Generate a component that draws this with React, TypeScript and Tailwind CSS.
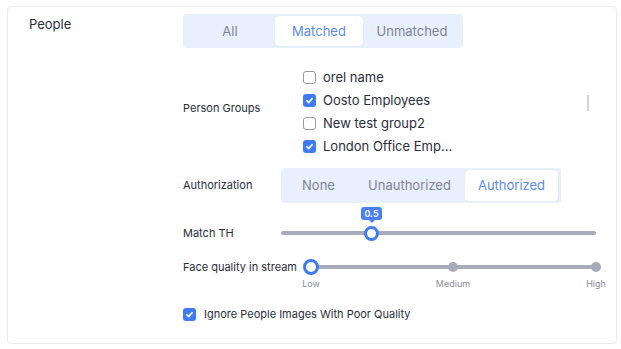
import React from "react";

const font = { fontFamily: "Inter, 'Noto Sans', sans-serif" };

function Check({ checked }: { checked: boolean }) {
  return checked ? (
    <div className="w-[13px] h-[13px] rounded-[3px] bg-[#3f7bf5] flex items-center justify-center shrink-0">
      <svg width="9" height="9" viewBox="0 0 10 10" fill="none">
        <path d="M2 5.2 L4.2 7.3 L8 2.8" stroke="white" strokeWidth="1.8" strokeLinecap="round" strokeLinejoin="round" />
      </svg>
    </div>
  ) : (
    <div className="w-[13px] h-[13px] rounded-[3px] border-[1.5px] border-[#9a9a9a] bg-white shrink-0" />
  );
}

function Tab({ label, active, w }: { label: string; active?: boolean; w: string }) {
  return (
    <div
      className={
        "flex items-center justify-center h-full text-[13px] " +
        w +
        (active ? " bg-white rounded-[4px] text-[#5b8bef] shadow-[0_0_1px_rgba(0,0,0,0.15)]" : " text-[#7f8393]")
      }
    >
      {label}
    </div>
  );
}

export default function App() {
  const groups = [
    { name: "orel name", checked: false },
    { name: "Oosto Employees", checked: true },
    { name: "New test group2", checked: false },
    { name: "London Office Emp...", checked: true },
  ];
  return (
    <div className="w-[621px] h-[349px] bg-white pt-[6px] pl-[7px]" style={font}>
      <div className="w-[610px] h-[338px] border border-[#ebebeb] rounded-[4px] flex">
        <div className="w-[175px] pl-[21px] pt-[8px] text-[13px] text-[#2a2d3a] leading-[18px]">People</div>
        <div className="flex flex-col">
          {/* Matched segment */}
          <div className="mt-[7px] w-[280px] h-[34px] bg-[#e8effd] rounded-[4px] p-[2px] flex">
            <Tab label="All" w="w-[90px] pt-[2px]" />
            <Tab label="Matched" active w="w-[88px] pt-[2px]" />
            <Tab label="Unmatched" w="w-[98px] pt-[2px]" />
          </div>

          {/* Person groups */}
          <div className="mt-[18px] flex">
            <div className="w-[120px] pt-[34px] text-[11px] leading-[16px] text-[#2a2d3a]">Person Groups</div>
            <div className="relative w-[287px] flex flex-col">
              {groups.map((g) => (
                <div key={g.name} className="h-[23px] flex items-center gap-[7px] text-[13px] text-[#2a2d3a]">
                  <Check checked={g.checked} />
                  <span>{g.name}</span>
                </div>
              ))}
              <div className="absolute left-[284px] top-[29px] w-[2px] h-[16px] bg-[#d3d3de]" />
            </div>
          </div>

          {/* Authorization */}
          <div className="mt-[10px] flex items-center">
            <div className="w-[98px] text-[11px] text-[#2a2d3a]">Authorization</div>
            <div className="w-[280px] h-[35px] bg-[#e8effd] rounded-[4px] p-[2px] flex">
              <Tab label="None" w="w-[71px]" />
              <Tab label="Unauthorized" w="w-[111px]" />
              <Tab label="Authorized" active w="w-[93px]" />
            </div>
          </div>

          {/* Match TH */}
          <div className="mt-[20px] h-[20px] flex items-center">
            <div className="w-[98px] text-[11px] text-[#2a2d3a]">Match TH</div>
            <div className="relative w-[315px] h-[4px] rounded-full bg-[#a7abbd]">
              <div className="absolute left-[83px] top-[-5.5px] w-[15px] h-[15px] rounded-full border-[3px] border-[#3f7bf5] bg-white" />
              <div className="absolute left-[80px] top-[-24px] flex flex-col items-center">
                <div className="w-[21px] h-[13px] rounded-[3px] bg-[#4a7ff5] text-white text-[9px] leading-[13px] font-semibold text-center">0.5</div>
                <div className="w-0 h-0 border-l-[3px] border-r-[3px] border-t-[3px] border-l-transparent border-r-transparent border-t-[#4a7ff5]" />
              </div>
            </div>
          </div>

          {/* Face quality */}
          <div className="mt-[14px] h-[20px] flex items-center">
            <div className="w-[128px] text-[11px] text-[#2a2d3a]">Face quality in stream</div>
            <div className="relative w-[285px] h-[4px] rounded-full bg-[#a7abbd]">
              <div className="absolute left-[137px] top-[-3px] w-[10px] h-[10px] rounded-full bg-[#a7abbd]" />
              <div className="absolute left-[280px] top-[-3px] w-[10px] h-[10px] rounded-full bg-[#a7abbd]" />
              <div className="absolute left-[-8px] top-[-6px] w-[16px] h-[16px] rounded-full border-[3px] border-[#3f7bf5] bg-white" />
            </div>
          </div>
          <div className="mt-[1px] h-[12px] ml-[128px] w-[285px] relative text-[9px] leading-[12px] text-[#8a8d99]">
            <span className="absolute left-0 -translate-x-1/2">Low</span>
            <span className="absolute left-[142px] -translate-x-1/2">Medium</span>
            <span className="absolute left-[285px] -translate-x-1/2">High</span>
          </div>

          {/* Ignore */}
          <div className="mt-[16px] flex items-center gap-[8px] text-[11px] text-[#2a2d3a]">
            <Check checked />
            <span>Ignore People Images With Poor Quality</span>
          </div>
        </div>
      </div>
    </div>
  );
}
